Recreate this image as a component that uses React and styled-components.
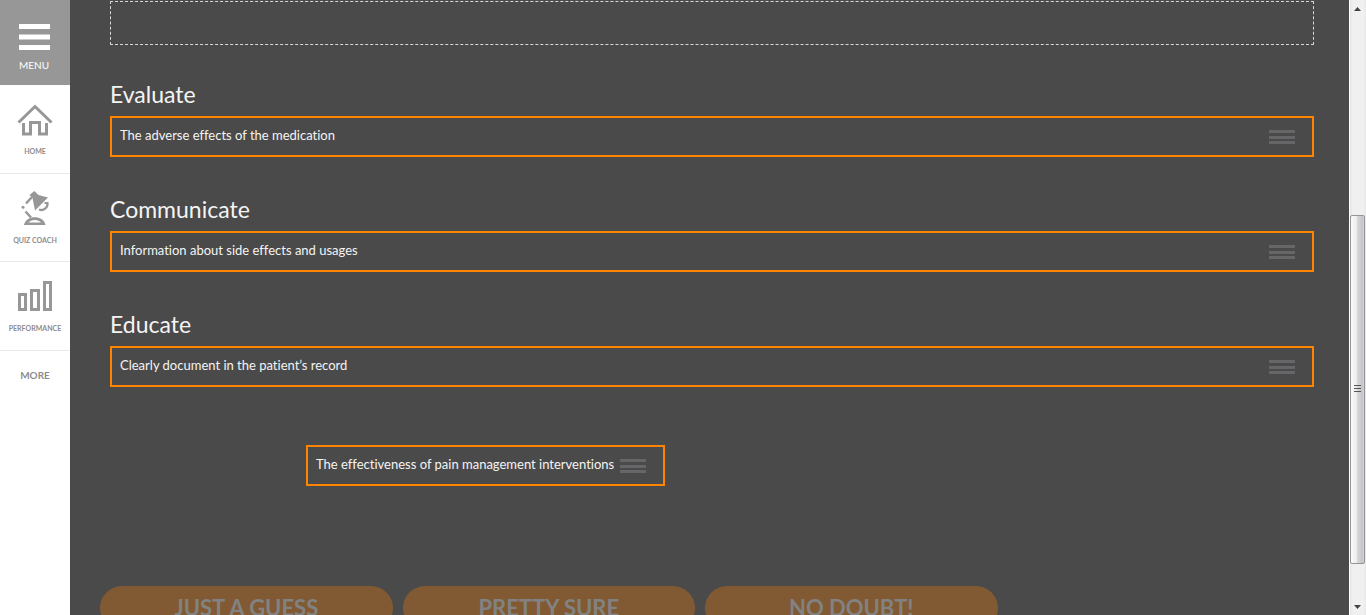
import React from "react";
import styled, { createGlobalStyle } from "styled-components";

const Global = createGlobalStyle`
  * { box-sizing: border-box; }
  body {
    margin: 0;
    background: #4a4a4a;
    font-family: Lato, "Open Sans", sans-serif;
    font-variant-ligatures: none;
  }
  button { font-family: inherit; }
`;

const Page = styled.div`
  display: flex;
  height: 100vh;
  overflow: hidden;
`;

const Sidebar = styled.nav`
  flex: 0 0 70px;
  display: flex;
  flex-direction: column;
  background: #fff;
`;

const MenuButton = styled.button`
  display: flex;
  flex-direction: column;
  align-items: center;
  gap: 7px;
  height: 85px;
  padding: 24px 2px 0 0;
  border: 0;
  background: #979797;
  color: #fff;
  font-size: 10px;
  line-height: 16px;
  svg { flex: none; }
`;

const NavLink = styled.a`
  display: flex;
  flex-direction: column;
  align-items: center;
  justify-content: flex-end;
  gap: 9px;
  height: 89px;
  padding-bottom: 16px;
  border-bottom: 1px solid #e9e9e9;
  color: #8d8d8d;
  font-size: 7px;
  font-weight: 700;
  line-height: 11px;
  text-decoration: none;
  text-transform: uppercase;
  &:nth-of-type(2) { height: 88px; padding-bottom: 15px; }
`;

const MoreLink = styled.a`
  padding-top: 17px;
  color: #8d8d8d;
  font-size: 10px;
  font-weight: 700;
  line-height: 14px;
  text-align: center;
  text-decoration: none;
`;

const Main = styled.main`
  flex: 1;
  min-width: 0;
  padding: 1px 35px 0 30px;
  color: #f4f4f4;
`;

const Board = styled.div`
  padding-left: 10px;
`;

const DropZone = styled.div`
  height: 44px;
  border: 1px dashed #d8d8d8;
`;

const Group = styled.section`
  padding-top: 33px;
  & + & { padding-top: 36px; }
`;

const Heading = styled.h2`
  margin: 0;
  padding-bottom: 6px;
  font-size: 23px;
  font-weight: 400;
  line-height: 32px;
`;

const Item = styled.div`
  display: flex;
  align-items: center;
  justify-content: space-between;
  width: ${(p) => (p.$floating ? "359px" : "auto")};
  margin: ${(p) => (p.$floating ? "58px 0 0 196px" : "0")};
  height: 41px;
  padding: 0 17px 0 8px;
  border: 2px solid #ff8500;
  font-size: 13px;
  line-height: 20px;
  white-space: nowrap;
`;

const ItemText = styled.span`
  padding-bottom: 3px;
`;

const Handle = styled.button`
  display: flex;
  padding: 0;
  border: 0;
  background: none;
  cursor: move;
`;

const Answers = styled.div`
  display: flex;
  gap: 10px;
  padding-top: 100px;
`;

const Answer = styled.button`
  flex: 0 0 calc(25% - 11px);
  height: 44px;
  padding: 0;
  border: 0;
  border-radius: 22px;
  background: #815a33;
  color: #828282;
  font-size: 22px;
  font-weight: 700;
  line-height: 44px;
`;

const ScrollTrack = styled.div`
  flex: 0 0 17px;
  display: flex;
  flex-direction: column;
  align-items: center;
  justify-content: space-between;
  padding: 7px 0 6px;
  background: linear-gradient(90deg, #fff 0 1px, #e6e6e6 1px, #f0f0f0 4px 15px, #e6e6e6);
`;

const ScrollThumb = styled.div`
  display: flex;
  align-items: center;
  justify-content: center;
  width: 15px;
  height: 58%;
  margin-top: auto;
  margin-bottom: 41px;
  border: 1px solid #959595;
  border-radius: 2px;
  background: linear-gradient(90deg, #fafafa, #ececee 45%, #d7d7da 50%, #c4c4c9 90%, #dcdcdf);
`;

const HomeIcon = () => (
  <svg width="36" height="34" viewBox="0 0 36 34" fill="none" stroke="#979797">
    <path d="M1.500 19.500 18 3.500 34.500 19.500" strokeWidth="3" />
    <path d="M6.500 20v11h7V19.500h9V31h7V20" strokeWidth="3" />
  </svg>
);

const LampIcon = () => (
  <svg width="36" height="36" viewBox="0 0 36 36" fill="none" stroke="#979797" strokeWidth="2.500">
    <path d="M17.300 1 21.500 5 31 7.500 18 20.500 15.500 8 12.500 5Z" fill="#979797" stroke="none" />
    <path d="M15 7 9 13.500M8.500 21.500l5.500 6" />
    <circle cx="6" cy="17.300" r="1.500" fill="#979797" stroke="none" />
    <path d="M27.500 13h3c.5 4.500-4 8.500-8.500 6.500" strokeWidth="2.200" />
    <path d="M7 35c1.500-10.500 20-10.500 21.500 0Z" fill="#979797" stroke="none" />
    <path d="M11.500 32.500c2.500-3.500 10-3.500 12.500 0Z" fill="#fff" stroke="none" />
  </svg>
);

const ChartIcon = () => (
  <svg width="36" height="36" viewBox="0 0 36 36" fill="none" stroke="#979797" strokeWidth="3">
    <path d="M2.500 16.500h6v15h-6ZM14.500 12.500h7v19h-7ZM27.500 4.500h6v27h-6Z" />
  </svg>
);

const Grip = () => (
  <svg width="26" height="14" viewBox="0 0 26 14" fill="#666668">
    <path d="M0 0h26v3H0ZM0 6h26v3H0ZM0 11h26v3H0Z" />
  </svg>
);

const NAV = [
  { label: "Home", Icon: HomeIcon },
  { label: "Quiz Coach", Icon: LampIcon },
  { label: "Performance", Icon: ChartIcon },
];

const GROUPS = [
  { title: "Evaluate", text: "The adverse effects of the medication" },
  { title: "Communicate", text: "Information about side effects and usages" },
  { title: "Educate", text: "Clearly document in the patient’s record" },
];

const ANSWERS = ["JUST A GUESS", "PRETTY SURE", "NO DOUBT!"];

function DragItem({ text, floating }) {
  return (
    <Item $floating={floating} draggable>
      <ItemText>{text}</ItemText>
      <Handle type="button" aria-label={`Move: ${text}`}>
        <Grip />
      </Handle>
    </Item>
  );
}

export default function App() {
  return (
    <Page>
      <Global />
      <Sidebar>
        <MenuButton type="button">
          <svg width="31" height="26" viewBox="0 0 31 26" fill="#fff">
            <path d="M0 0h31v5H0ZM0 10.500h31v5H0ZM0 21h31v5H0Z" />
          </svg>
          MENU
        </MenuButton>
        {NAV.map(({ label, Icon }) => (
          <NavLink href="#" key={label}>
            <Icon />
            {label}
          </NavLink>
        ))}
        <MoreLink href="#">MORE</MoreLink>
      </Sidebar>
      <Main>
        <Board>
          <DropZone />
          {GROUPS.map((g) => (
            <Group key={g.title}>
              <Heading>{g.title}</Heading>
              <DragItem text={g.text} />
            </Group>
          ))}
          <DragItem text="The effectiveness of pain management interventions" floating />
        </Board>
        <Answers>
          {ANSWERS.map((a) => (
            <Answer type="button" key={a}>{a}</Answer>
          ))}
        </Answers>
      </Main>
      <ScrollTrack aria-hidden="true">
        <svg width="7" height="4" viewBox="0 0 7 4" fill="#444"><path d="M3.500 0 7 4H0Z" /></svg>
        <ScrollThumb>
          <svg width="7" height="8" viewBox="0 0 7 8" fill="#555">
            <path d="M0 0h7v1H0ZM0 3h7v1H0ZM0 6h7v1H0Z" />
          </svg>
        </ScrollThumb>
        <svg width="7" height="4" viewBox="0 0 7 4" fill="#444"><path d="M0 0h7L3.500 4Z" /></svg>
      </ScrollTrack>
    </Page>
  );
}
